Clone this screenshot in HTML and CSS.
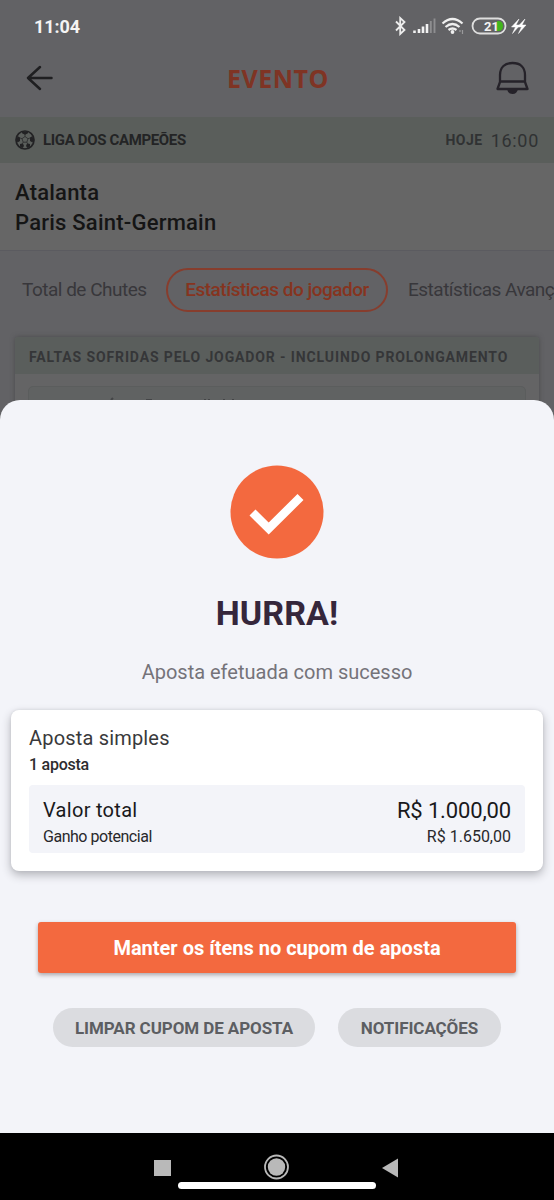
FILE: index.html
```html
<!DOCTYPE html>
<html lang="pt-BR">
<head>
<meta charset="utf-8">
<title>Evento</title>
<link rel="stylesheet" href="styles.css">
</head>
<body>
<div class="phone">
  <div class="page">
    <div class="status">
      <span class="clock">11:04</span>
      <svg class="status-icons" width="134" height="20" viewBox="0 0 134 20" fill="none">
        <path d="M2 5.500l8.500 8.500-4.300 4V2l4.300 4L2 14.500" stroke="#ececec" stroke-width="1.800"/>
        <path d="M20.500 14.500V17M25 13v4M29 10.500V17M33 8v9" stroke="#f2f2f2" stroke-width="2.600"/>
        <path d="M36.800 5v12M40.500 2.500V17" stroke="#8e8e90" stroke-width="1.900"/>
        <path d="M48.500 7.500q10-9 20 0M51.500 11q7-6 14 0M54.500 14q4-3 8 0" stroke="#efefef" stroke-width="2.200"/>
        <circle cx="58.500" cy="16" r="1.900" fill="#efefef"/>
        <path d="M66 14v2M68.500 14v4" stroke="#99999b" stroke-width="1.200"/>
        <path d="M103 5h1q5 0 5 5t-5 5h-1z" fill="#42b51c"/>
        <rect x="78.500" y="2.500" width="33" height="15" rx="7.500" stroke="#dedede" stroke-width="1.800"/>
        <text class="battery" x="90" y="14.600">21</text>
        <path d="M125 3l-7.500 8h4l-3 6.500 7.500-8.500h-4zM131 3l-7.500 8h4l-3 6.500 7.500-8.500h-4z" fill="#fff" stroke="#fff" stroke-width=".5"/>
      </svg>
    </div>
    <header class="header">
      <svg width="28" height="28" viewBox="0 0 28 28" fill="none" stroke="#1f1f21" stroke-width="2.500" stroke-linecap="round" stroke-linejoin="round"><path d="M25.500 14H2M14 3L2 14l12 11"/></svg>
      <h1 class="title">EVENTO</h1>
      <svg width="34" height="34" viewBox="0 0 34 34" fill="none" stroke="#252229" stroke-width="2.300" stroke-linejoin="round"><path d="M5 21v-7C5 6 10 2 17.500 2S30 6 30 14v7l2.500 7h-30zM5 20.500h25"/><path d="M12 28h11q-1 5-5.500 5t-5.500-5z" fill="#252229" stroke="none"/></svg>
    </header>
    <div class="league">
      <svg width="20" height="20" viewBox="0 0 20 20" fill="none" stroke="#222224"><circle cx="10" cy="10" r="9" stroke-width="1.700"/><path d="M10 6.500L7 8.700l1.200 3.500h3.600L13 8.700zM10 6.500V4M7 8.700L5 8M13 8.700L15 8M8.200 12.200L7 14M11.800 12.200L13 14" stroke-width=".7"/><path d="M7 1.500h6v1.800l-3 1.500-3-1.500zM2.500 6L5 7.500V11l-2.500 1.500-1-2.500zM17.500 6L15 7.500V11l2.500 1.500 1-2.500zM5 14l3-.500 1 2.500-1.500 2L5 16.500zM15 14l-3-.500-1 2.500 1.500 2 2.500-1.500z" fill="#222224" stroke="none"/></svg>
      <span class="league-name">LIGA DOS CAMPEÕES</span>
      <span class="today">HOJE</span><span class="hour">16:00</span>
    </div>
    <div class="teams"><div>Atalanta</div><div>Paris Saint-Germain</div></div>
    <nav class="tabs">
      <span class="tab tab-first">Total de Chutes</span>
      <span class="tab tab-active">Estatísticas do jogador</span>
      <span class="tab tab-last">Estatísticas Avançadas</span>
    </nav>
    <section class="market">
      <div class="market-head"><span>FALTAS SOFRIDAS PELO JOGADOR - INCLUINDO PROLONGAMENTO</span></div>
      <div class="market-row"><svg width="240" height="14" viewBox="0 0 240 14" stroke="#444547" stroke-width="2"><path d="M82 13l2-2M117 13h6M176 12v2M180 12v2M194 13h2M204 12v2"/></svg></div>
    </section>
  </div>
  <main class="sheet">
    <svg class="check" width="94" height="94" viewBox="0 0 94 94"><circle cx="47" cy="47" r="46.500" fill="#f3693f"/><path d="M22.500 47.500L38.700 63.500 70.500 32" fill="none" stroke="#fff" stroke-width="8.500"/></svg>
    <h2 class="hurray"><span>HURRA!</span></h2>
    <p class="message"><span>Aposta efetuada com sucesso</span></p>
    <section class="card">
      <div class="bet"><span>Aposta simples</span></div>
      <div class="count"><span>1 aposta</span></div>
      <div class="totals">
        <div class="total"><span class="total-label">Valor total</span><span class="total-value">R$ 1.000,00</span></div>
        <div class="gain"><span class="gain-label">Ganho potencial</span><span class="gain-value">R$ 1.650,00</span></div>
      </div>
    </section>
    <button class="keep"><span>Manter os ítens no cupom de aposta</span></button>
    <div class="actions"><button class="pill pill-clear">LIMPAR CUPOM DE APOSTA</button><button class="pill pill-notify">NOTIFICAÇÕES</button></div>
  </main>
  <footer class="nav">
    <svg width="554" height="67" viewBox="0 0 554 67"><g fill="#b9b9b9"><path d="M154 27h17v16h-17z"/><circle cx="276.500" cy="34" r="8.700"/><path d="M382 35l16-9.500v19z"/></g><circle cx="276.500" cy="34" r="11.500" fill="none" stroke="#b9b9b9" stroke-width="1.800"/><rect x="178" y="49" width="198" height="7" rx="3.500" fill="#fff"/></svg>
  </footer>
</div>
</body>
</html>
```
FILE: styles.css
```css
* { box-sizing: border-box; }
body { margin: 0; font-family: Roboto, sans-serif; background: #000; }
h1, h2, p { margin: 0; }
button { border: 0; font-family: inherit; padding: 0; }
.phone { width: 554px; height: 1200px; overflow: hidden; display: flex; flex-direction: column; }
.page { height: 420px; background: #626265; flex: none; overflow: hidden; }
.status { height: 52px; padding: 16px 26px 0 34px; display: flex; justify-content: space-between; }
.clock { font-size: 18px; line-height: 21px; font-weight: 700; color: #f4f4f4; letter-spacing: -.1px; }
.battery { font: 700 13px Roboto, sans-serif; fill: #f2f2f2; }
.header { height: 65px; padding: 0 25px 13px 26px; display: flex; justify-content: space-between; align-items: center; }
.title { font: 700 25px "Open Sans", sans-serif; color: #7f3424; letter-spacing: .5px; padding-left: 7px; }
.league { height: 46px; background: #5a5e5b; display: flex; align-items: center; padding: 0 15px; color: #232425; font-weight: 700; }
.league-name { margin-left: 8px; font-size: 15px; letter-spacing: -.35px; flex: 1; }
.today { font-size: 14px; letter-spacing: .5px; color: #303233; }
.hour { font-size: 18px; font-weight: 400; letter-spacing: .7px; margin-left: 8px; color: #303233; }
.teams { height: 88px; background: #666; padding: 15px 15px 13px; font-size: 22px; line-height: 30px; font-weight: 500; letter-spacing: .22px; color: #151515; border-bottom: 1px solid #5b5b60; }
.tabs { height: 77px; display: flex; align-items: center; overflow: hidden; white-space: nowrap; font-size: 19px; letter-spacing: -.5px; color: #38373b; padding-left: 22px; }
.tab { flex: none; }
.tab-first { width: 144px; }
.tab-active { width: 222px; height: 44px; border: 2px solid #873d2d; border-radius: 22px; color: #86341f; text-align: center; line-height: 40px; font-weight: 500; }
.tab-last { margin-left: 20px; }
.market { margin: 9px 15px 0; height: 83px; background: #646465; box-shadow: 0 0 5px #4b4b4d; overflow: hidden; border-radius: 3px 3px 0 0; }
.market-head { height: 37px; background: #5a5e5c; line-height: 40px; padding-left: 14px; font-size: 14px; letter-spacing: .88px; font-weight: 700; color: #353638; white-space: nowrap; }
.market-row { margin: 12px 13px 0; height: 40px; border: 1px solid #5b5d5d; border-radius: 5px; background: #606262; }
.market-row svg { display: block; }
.sheet { position: relative; height: 733px; flex: none; margin-top: -20px; padding-top: 65px; background: #f3f4f9; border-radius: 20px 20px 0 0; display: flex; flex-direction: column; align-items: center; }
.check { flex: none; display: block; }
.hurray { margin-top: 34px; height: 40px; line-height: 40px; font-size: 34px; font-weight: 700; letter-spacing: .1px; color: #35263b; white-space: nowrap; }
.message { margin-top: 27px; height: 24px; line-height: 24px; font-size: 20px; color: #757379; white-space: nowrap; }
.card { width: 532px; height: 161px; margin-top: 26px; padding: 14px 18px; border-radius: 8px; background: #fff; box-shadow: 0 4px 10px #b2b3b9, 0 0 3px #d7d8de; flex: none; }
.bet { font-size: 20px; line-height: 28px; letter-spacing: .18px; color: #39393b; }
.count { font-size: 16px; line-height: 25px; letter-spacing: -.25px; font-weight: 500; color: #2d2d2f; }
.totals { margin-top: 8px; height: 68px; border-radius: 4px; background: #f3f4f9; padding: 12px 14px 0; }
.total, .gain { display: flex; justify-content: space-between; }
.total { font-size: 20px; line-height: 27px; letter-spacing: .3px; color: #19191c; }
.total-value { font-size: 22px; letter-spacing: -.15px; }
.gain { font-size: 16px; line-height: 25px; color: #28282b; }
.gain-label { letter-spacing: -.47px; }
.keep { width: 478px; height: 51px; margin-top: 51px; flex: none; border-radius: 3px; background: #f3693f; color: #fff; font-size: 20px; font-weight: 700; box-shadow: 0 2px 4px #aaa6aa; }
.actions { margin-top: 35px; display: flex; gap: 23px; }
.pill { height: 39px; border-radius: 20px; background: #dbdce0; color: #5c5e62; font-size: 17px; letter-spacing: -.08px; font-weight: 700; white-space: nowrap; }
.pill-clear { width: 262px; }
.pill-notify { width: 163px; }
.nav { height: 67px; background: #000; flex: none; }
.nav svg { display: block; }
```
